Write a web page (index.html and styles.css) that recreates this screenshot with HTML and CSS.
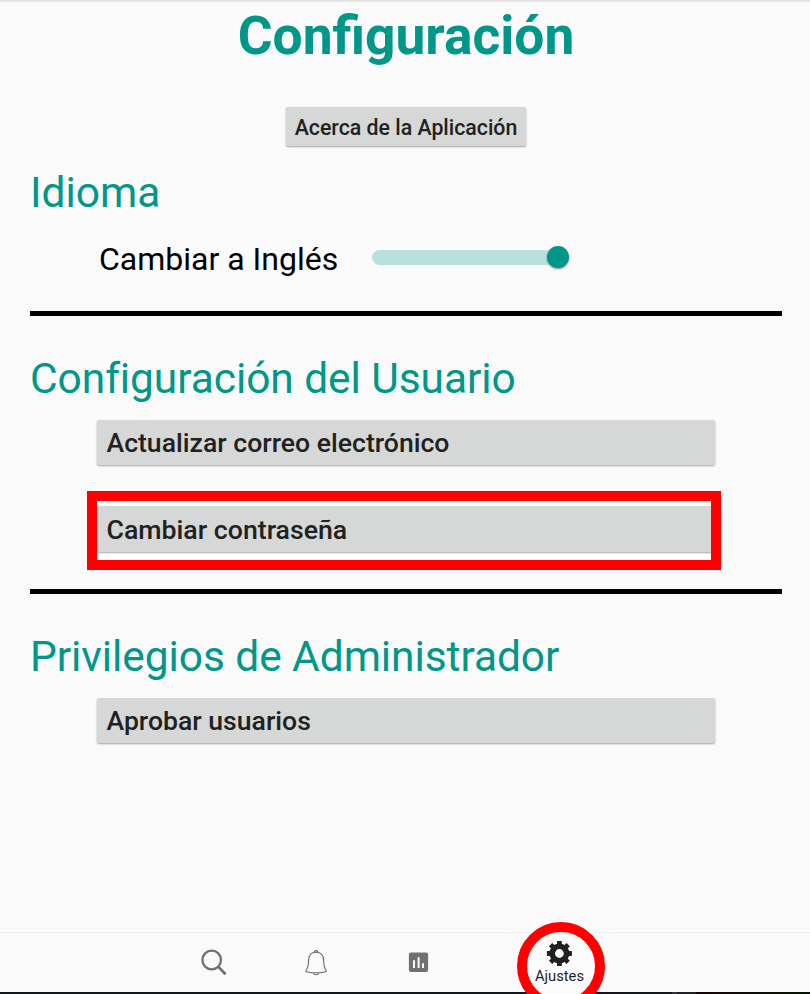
FILE: index.html
```html
<!DOCTYPE html>
<html lang="es">
<head>
<meta charset="utf-8">
<title>Configuración</title>
<link rel="stylesheet" href="styles.css">
</head>
<body>
<div class="app">
  <main class="content">
    <h1>Configuración</h1>
    <button class="btn about">Acerca de la Aplicación</button>
    <section class="language">
      <h2 class="idioma">Idioma</h2>
      <div class="switch-row">
        <span class="switch-label">Cambiar a Inglés</span>
        <span class="track"><span class="knob"></span></span>
      </div>
    </section>
    <section class="user">
      <h2 class="usuario">Configuración del Usuario</h2>
      <button class="btn wide">Actualizar correo electrónico</button>
      <div class="highlight"><button class="btn inner">Cambiar contraseña</button></div>
    </section>
    <section class="admin">
      <h2 class="privilegios">Privilegios de Administrador</h2>
      <button class="btn wide">Aprobar usuarios</button>
    </section>
  </main>
  <nav class="nav">
    <a class="item"><svg width="30" height="30" viewBox="0 0 30 30" fill="none" stroke="#707070"><circle cx="13.700" cy="12" r="9.300" stroke-width="2.300"/><path d="M20.200 18.600 27.500 26.200" stroke-width="2.800"/></svg></a>
    <a class="item"><svg width="30" height="30" viewBox="0 0 30 30" fill="none" stroke="#6a6a6a" stroke-width="1.100"><path d="M13.300 4.400a1.800 1.800 0 1 1 3.600 0M15.100 4.200c-5.200 0-7.300 3.200-7.500 8-.2 4.300-.2 6.300-1.700 8.600-.8 1.100-1.200 1.700-.9 2.700 2.200.9 6 1.300 10.100 1.300s7.900-.4 10.100-1.300c.3-1-.1-1.600-.9-2.700-1.500-2.300-1.500-4.300-1.700-8.600-.2-4.800-2.300-8-7.500-8zM12.300 24.900c.4 1.300 1.500 1.900 2.800 1.900s2.400-.6 2.800-1.900"/></svg></a>
    <a class="item"><svg width="30" height="30" viewBox="0 0 30 30"><rect x="4.900" y="4.600" width="19.200" height="19.400" rx="2" fill="#707070"/><path d="M9 12.200h2v7.800H9zM13.600 9.200h2v10.800h-2zM18 15.200h2v4.800h-2z" fill="#fafafa"/></svg></a>
    <a class="item active">
      <svg class="gear" width="30" height="30" viewBox="-15.400 -14.500 30 30" fill="none" stroke="#212121">
        <circle r="7.200" stroke-width="5.600"/>
        <path d="M0-12.500V-8M0 8v4.500M-12.500 0H-8M8 0h4.500" stroke-width="4.800"/>
        <path d="M-8.800-8.800l3.300 3.300M5.500 5.500l3.300 3.300M8.800-8.800l-3.300 3.300M-5.500 5.500l-3.300 3.300" stroke-width="4.600"/>
      </svg>
      <span class="label">Ajustes</span>
    </a>
    <span class="ring"></span>
  </nav>
</div>
</body>
</html>
```
FILE: styles.css
```css
* { box-sizing: border-box; }
body { margin: 0; background: #fafafa; font-family: Roboto, sans-serif; color: #000; }
.app { height: 994px; display: flex; flex-direction: column; overflow: hidden; background: linear-gradient(#dcdcdc, #fafafa 3px); }
.content { flex: 1; display: flex; flex-direction: column; align-items: stretch; padding: 6px 28px 0 30px; }
h1 { margin: 0; height: 60px; line-height: 60px; font-size: 53.300px; font-weight: 700; color: #009688; text-align: center; }
h2 { margin: 0; height: 50px; line-height: 50px; font-size: 42.500px; font-weight: 400; color: #009688; white-space: nowrap; }
.usuario { letter-spacing: -.08px; }
.privilegios { letter-spacing: -.08px; }
.btn { display: block; border: 0; border-radius: 2px; background: #d6d8d7; color: #212121; font-family: inherit; font-weight: 500; white-space: nowrap; box-shadow: 0 1px 2px rgba(0,0,0,.35); }
.about { align-self: center; width: 240px; height: 39px; margin-top: 41px; padding: 1px 0 0; font-size: 21.300px; }
.language { height: 148px; margin-top: 22px; border-bottom: 5px solid #000; }
.switch-row { display: flex; align-items: center; height: 40px; margin-top: 21px; padding-left: 69px; }
.switch-label { width: 272.500px; font-size: 32px; line-height: 40px; white-space: nowrap; }
.track { display: flex; align-items: center; justify-content: flex-end; width: 193.500px; height: 15px; margin-top: -3px; border-radius: 8px; background: #b8e1dd; }
.knob { flex: none; width: 22px; height: 22px; margin: -1px -4px 0 0; border-radius: 50%; background: #009688; box-shadow: 0 1px 2px rgba(0,0,0,.45); }
.user { height: 278px; padding-top: 38px; border-bottom: 5px solid #000; }
.wide { width: 618px; height: 45px; margin: 16px 0 0 67px; padding: 0 9.500px 1px; font-size: 26.600px; text-align: left; }
.highlight { width: 634px; height: 79px; margin: 26px 0 0 57px; padding-top: 5px; border: 10px solid #f00; background: #fff; overflow: hidden; }
.inner { width: 618px; height: 46px; padding: 1px 9.500px 0; font-size: 26.700px; text-align: left; }
.admin { padding-top: 38px; }
.nav { position: relative; display: grid; grid-template-columns: 102px 103px 103px 178px; justify-content: start; height: 62px; padding-left: 162px; background: linear-gradient(90deg, #17181a 672px, #333 672px 677px, #202124 677px 696px, #170404 696px, #041404) bottom / 100% 2px no-repeat; border-top: 1px solid #f1f1f1; padding-bottom: 2px; }
.item { display: flex; justify-content: center; align-items: center; }
.active { z-index: 1; flex-direction: column; align-items: center; justify-content: flex-start; padding-top: 6px; }
.label { font-size: 14.700px; line-height: 18px; margin: -2px 0 0 1px; color: #212121; }
.gear { flex: none; }
.ring { position: absolute; left: 517px; top: -11px; width: 88px; height: 88px; border: 10px solid #f00; border-radius: 50%; background: #fcfcfc; }
```
